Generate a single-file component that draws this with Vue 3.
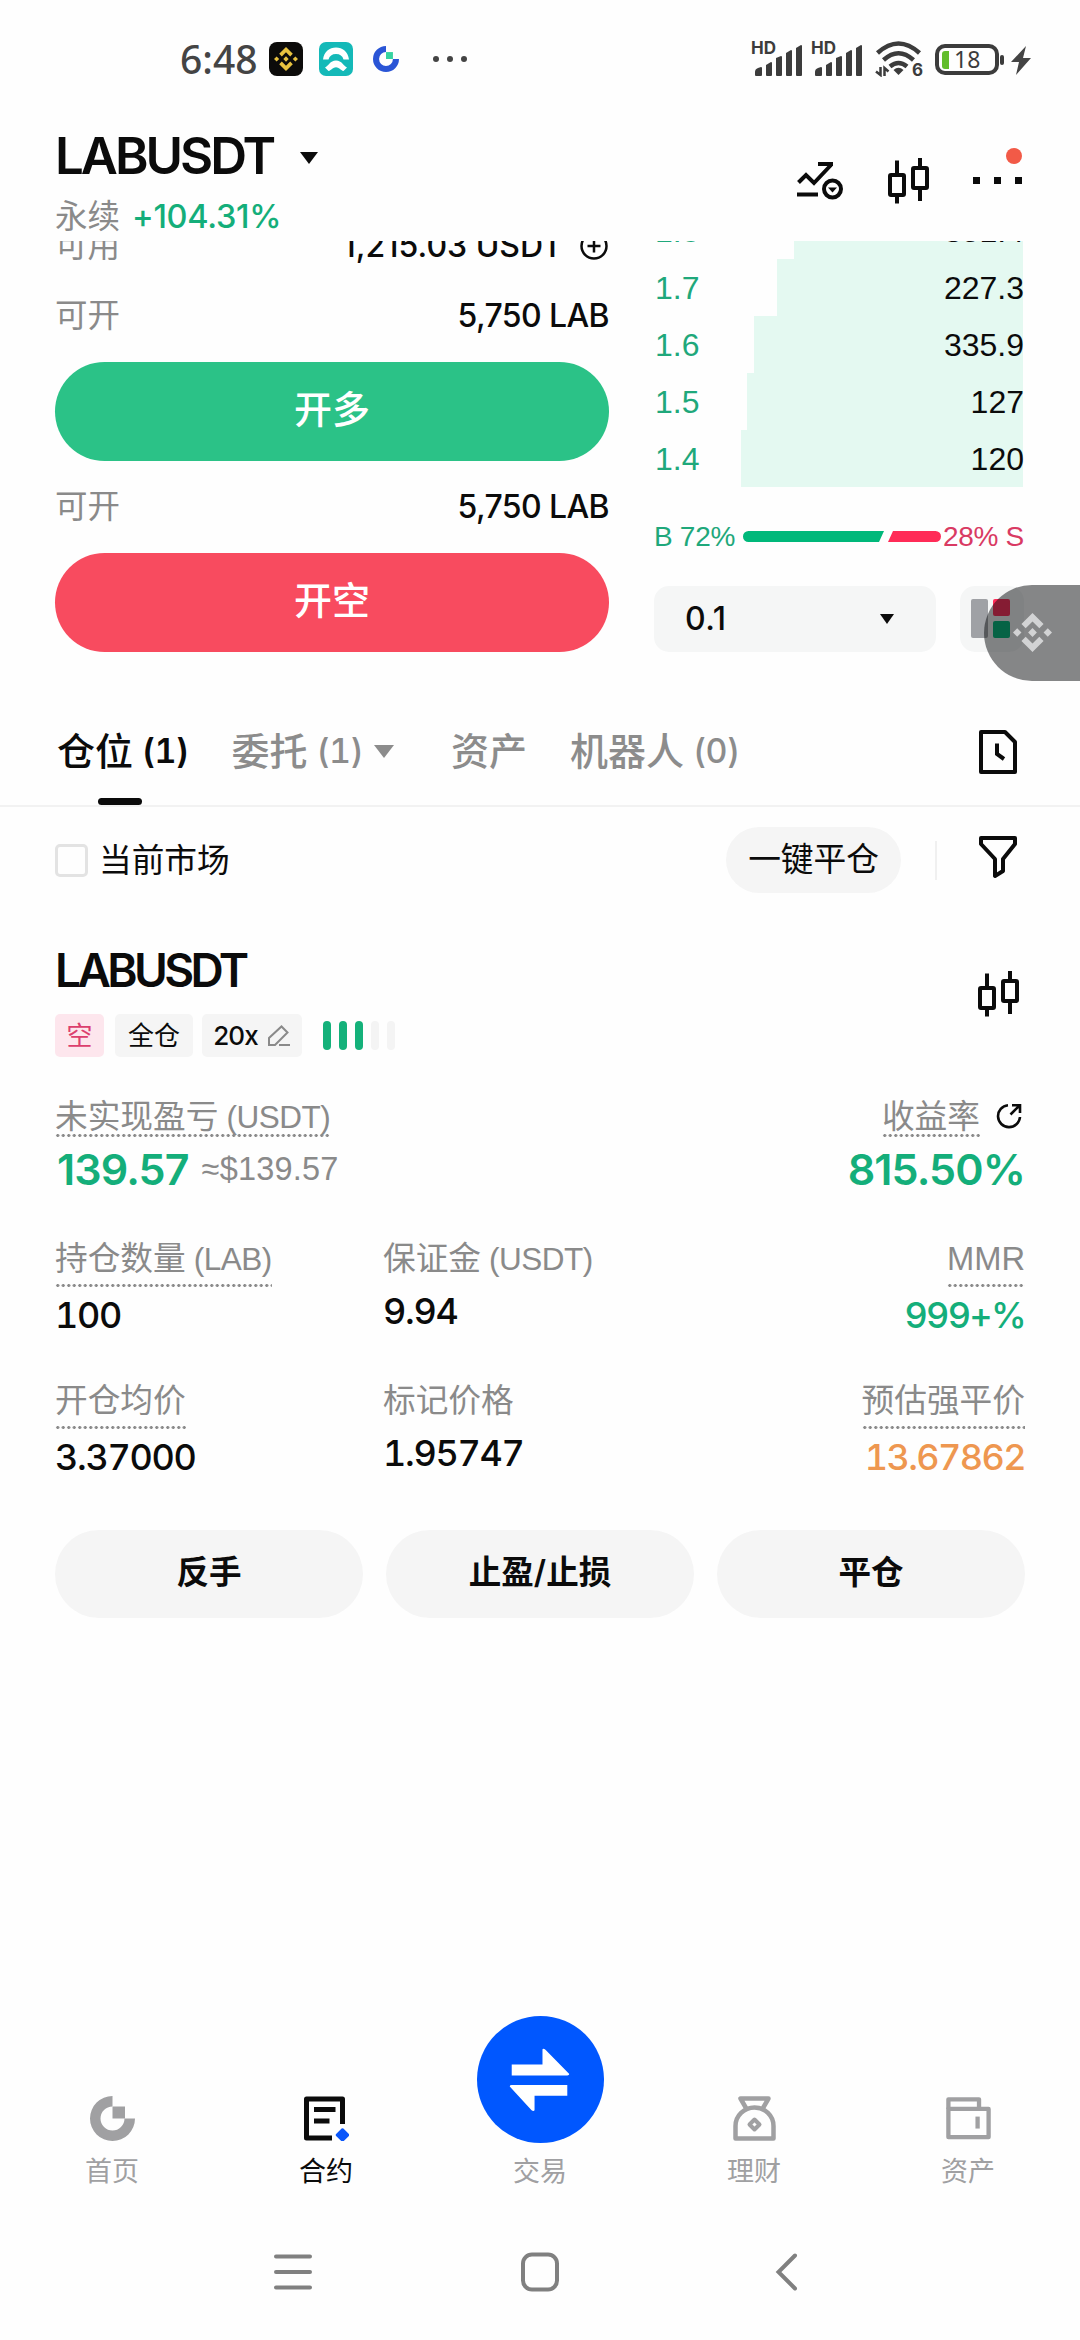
<template>
  <div class="screen">
    <header class="status">
      <div class="status__left">
        <span class="status__time">6:48</span>
        <svg class="status__app" viewBox="0 0 34 34">
          <rect width="34" height="34" rx="8" fill="#0c0b0a" />
          <g fill="#e8c23f" transform="translate(5 5)">
            <use href="#bnb" />
          </g>
        </svg>
        <svg class="status__app status__app--nio" viewBox="0 0 34 34">
          <rect width="34" height="34" rx="7" fill="#14b9b8" />
          <path d="M4 17.500C5 9.500 10.500 5.500 17 5.500s12 4 13 12h-5.500c-1-3.600-3.500-5.500-7.500-5.500s-6.500 1.900-7.500 5.500z" fill="#fff" />
          <path d="M6 25.500C9.500 24 11 18.500 17 18.500s7.500 5.500 11 7l-3.500 3.500c-3-.800-4.500-3.800-7.500-3.800S12.500 28.200 9.500 29z" fill="#fff" />
        </svg>
        <svg class="status__gate" viewBox="0 0 45 45">
          <path d="M22.500 0v10.500a12 12 0 1 0 12 12H45A22.500 22.500 0 1 1 22.500 0z" fill="#2a55d6" />
          <path d="M22.500 10.500h12v12h-12z" fill="#35d3a0" />
        </svg>
        <svg class="status__more" viewBox="0 0 36 8" fill="#444">
          <circle cx="4" cy="4" r="3" />
          <circle cx="18" cy="4" r="3" />
          <circle cx="32" cy="4" r="3" />
        </svg>
      </div>
      <div class="status__right">
        <div v-for="n in 2" :key="n" class="signal">
          <span class="signal__hd">HD</span>
          <svg viewBox="0 0 50 36" fill="#3c3c3c">
            <path d="M2 34v-3q0-3 3-4l3-1q1 0 1 1v7q0 1-1 1H3q-1 0-1-1z" />
            <path d="M13 34V24l5-3q1 0 1 1v12q0 1-1 1h-4q-1 0-1-1z" />
            <path d="M23 34V17l5-2q1 0 1 1v18q0 1-1 1h-4q-1 0-1-1z" />
            <path d="M33 34V12l5-3q1 0 1 1v24q0 1-1 1h-4q-1 0-1-1z" />
            <path d="M43 34V7l5-3q1 0 1 1v29q0 1-1 1h-4q-1 0-1-1z" />
          </svg>
        </div>
        <svg class="wifi" viewBox="0 0 48 36" fill="none" stroke="#3c3c3c">
          <path d="M2.500 12Q23.500-7 44.500 12" stroke-width="4.500" />
          <path d="M8.500 19Q23.500 5.500 38.500 19" stroke-width="4.500" />
          <path d="M15 25.500q8.500-7 17 0" stroke-width="4.500" />
          <path d="M18.500 29q5-4.500 10 0l-5 5z" fill="#3c3c3c" stroke="none" />
          <path d="M5.500 26v8L1 30.500M9.500 35v-8l4 3.500" stroke-width="2.500" />
          <text x="37" y="35" class="wifi__six">6</text>
        </svg>
        <svg class="battery" viewBox="0 0 100 32">
          <rect x="2" y="3" width="60" height="27" rx="8" fill="none" stroke="#3c3c3c" stroke-width="4" />
          <path d="M10 8h4v18h-4q-3 0-3-3V11q0-3 3-3z" fill="#62bd2c" />
          <rect x="65" y="12" width="4" height="10" rx="2" fill="#3c3c3c" />
          <text x="19" y="25" class="battery__text">18</text>
          <path d="M91 3 76 19h8l-3 13 15-17h-8z" fill="#444" />
        </svg>
      </div>
    </header>

    <section class="header">
      <div class="header__info">
        <div class="header__pair">
          <h1>LABUSDT</h1>
          <svg viewBox="0 0 18 12"><path d="M0 0h18L9 12z" fill="#0b0b0b" /></svg>
        </div>
        <div class="header__sub">
          <span>永续</span>
          <span class="header__change">+104.31%</span>
        </div>
      </div>
      <div class="header__icons">
        <svg class="header__trend" viewBox="0 0 46 38" fill="none" stroke="#0b0b0b" stroke-width="4">
          <path d="M1.500 20.500 9 13l8 8L34 3M21 2h15M0 32.500h21" />
          <circle cx="35.500" cy="27" r="8.500" />
          <path d="M31 25.500h9l-4.500 5z" fill="#0b0b0b" stroke="none" />
        </svg>
        <svg class="candles" viewBox="0 0 42 46"><use href="#candles" /></svg>
        <div class="header__menu">
          <i></i><i></i><i></i>
          <b class="header__badge"></b>
        </div>
      </div>
    </section>

    <section class="trade">
      <div class="order">
        <div class="order__row order__row--first">
          <span class="muted">可用</span>
          <span class="order__avail">
            1,215.03 USDT
            <svg viewBox="0 0 28 28" fill="none" stroke="#0b0b0b" stroke-width="2.500">
              <circle cx="14" cy="14" r="12.500" />
              <path d="M14 7.500v13M7.500 14h13" />
            </svg>
          </span>
        </div>
        <div class="order__row">
          <span class="muted">可开</span>
          <span class="order__max">5,750 LAB</span>
        </div>
        <button class="order__btn order__btn--long">开多</button>
        <div class="order__row">
          <span class="muted">可开</span>
          <span class="order__max">5,750 LAB</span>
        </div>
        <button class="order__btn order__btn--short">开空</button>
      </div>

      <div class="book">
        <div v-for="bid in bids" :key="bid.price" class="book__row">
          <div class="book__depth" :style="{ width: bid.depth + 'px' }"></div>
          <span class="book__price">{{ bid.price }}</span>
          <span class="book__amount">{{ bid.amount }}</span>
        </div>
        <div class="ratio">
          <span class="ratio__buy">B 72%</span>
          <svg viewBox="0 0 198 11">
            <path d="M5.500 0H141l-5 11H5.500a5.500 5.500 0 0 1 0-11z" fill="#00b87a" />
            <path d="M150 0h42.500a5.500 5.500 0 0 1 0 11H145z" fill="#ff2b57" />
          </svg>
          <span class="ratio__sell">28% S</span>
        </div>
        <div class="book__controls">
          <div class="book__step">
            <span>0.1</span>
            <svg viewBox="0 0 14 10"><path d="M0 0h14L7 10z" fill="#0b0b0b" /></svg>
          </div>
          <div class="book__layout">
            <svg viewBox="0 0 40 40">
              <rect width="17" height="39" rx="2" fill="#9fa1a5" />
              <rect x="22" width="17" height="17" rx="2" fill="#ff2b57" />
              <rect x="22" y="22" width="17" height="17" rx="2" fill="#00b87a" />
            </svg>
          </div>
        </div>
      </div>

      <div class="floating">
        <svg viewBox="0 0 24 24" fill="#d2d3d4"><use href="#bnb" /></svg>
      </div>
    </section>

    <nav class="tabs">
      <div class="tabs__item tabs__item--active">仓位<span>(1)</span></div>
      <div class="tabs__item tabs__item--orders">
        委托<span>(1)</span>
        <svg viewBox="0 0 20 13"><path d="M0 0h20L10 13z" fill="#8c8c8c" /></svg>
      </div>
      <div class="tabs__item">资产</div>
      <div class="tabs__item">机器人<span>(0)</span></div>
      <svg class="tabs__history" viewBox="0 0 38 44" fill="none" stroke="#0b0b0b" stroke-width="4">
        <path d="M2 2h24l10 10v30H2z" stroke-linejoin="round" />
        <path d="M18 13.500V24l7 5" />
      </svg>
    </nav>

    <section class="filter">
      <span class="filter__box"></span>
      <span class="filter__label">当前市场</span>
      <button class="filter__close">一键平仓</button>
      <i class="filter__line"></i>
      <svg class="filter__icon" viewBox="0 0 38 44" fill="none" stroke="#0b0b0b" stroke-width="4" stroke-linejoin="round">
        <path d="M2 3h34v6L24 24v12l-8 5V24L2 9z" />
      </svg>
    </section>

    <section class="position">
      <div class="position__head">
        <div>
          <h2>LABUSDT</h2>
          <div class="tags">
            <span class="tag tag--short">空</span>
            <span class="tag tag--mode">全仓</span>
            <span class="tag tag--lever">
              20x
              <svg viewBox="0 0 24 22" fill="none" stroke="#8a8a8a" stroke-width="2">
                <path d="M2 20v-7L14.500 1.500l6 6L8 20zM12 20h11" />
              </svg>
            </span>
            <span class="risk">
              <i v-for="n in 5" :key="n" :class="{ on: n <= 3 }"></i>
            </span>
          </div>
        </div>
        <svg class="candles candles--position" viewBox="0 0 42 46"><use href="#candles" /></svg>
      </div>

      <div class="pnl">
        <div>
          <span class="label label--dotted label--pnl">未实现盈亏<em>(USDT)</em></span>
          <div class="pnl__value">139.57 <small>≈$139.57</small></div>
        </div>
        <div class="pnl__right">
          <div class="pnl__rate">
            <span class="label label--dotted label--pnl">收益率</span>
            <svg viewBox="0 0 26 26" fill="none" stroke="#0b0b0b" stroke-width="2.600">
              <path d="M12 2.200A11 11 0 1 0 24 14M14.500 11.500 23 3M16 2.300h8V10" />
            </svg>
          </div>
          <div class="pnl__value">815.50%</div>
        </div>
      </div>

      <div v-for="(row, i) in stats" :key="i" class="stats">
        <div v-for="cell in row" :key="cell.label" class="stats__cell">
          <span class="label" :class="{ 'label--dotted': cell.dotted }">
            {{ cell.label }}<em v-if="cell.unit">{{ cell.unit }}</em>
          </span>
          <div class="stats__value" :class="cell.tone">{{ cell.value }}</div>
        </div>
      </div>

      <div class="actions">
        <button v-for="action in actions" :key="action">{{ action }}</button>
      </div>
    </section>

    <nav class="bottom">
      <div class="bottom__item">
        <svg class="bottom__icon" viewBox="0 0 45 45" fill="#a0a0a2">
          <path d="M22.500 0v10.500a12 12 0 1 0 12 12H45A22.500 22.500 0 1 1 22.500 0z" />
          <path d="M22.500 10.500h12.500v12h-12.500z" />
        </svg>
        <span>首页</span>
      </div>
      <div class="bottom__item bottom__item--active">
        <svg class="bottom__icon" viewBox="0 0 45 45" fill="none" stroke="#0b0b0b" stroke-width="5">
          <path d="M28 42H2.500V3H38.500v25" stroke-linejoin="round" />
          <path d="M10 13.500h21.500M10 25h15.500" />
          <path d="m38.500 33.500 5.500 5.500-5.500 5.500L33 39z" fill="#0a56fa" stroke="#0a56fa" stroke-width="2.500" stroke-linejoin="round" />
        </svg>
        <span>合约</span>
      </div>
      <div class="bottom__item">
        <svg class="bottom__trade" viewBox="0 0 128 128">
          <circle cx="64" cy="64" r="64" fill="#0057ff" />
          <path d="M35 49h31V33.500q1-1 3 .500L93 58.500q0 1.500-2 1.500H35z" fill="#fff" />
          <path d="M91 69.500v11H58V95q-1 1.500-3 0L33 71q0-1.500 2-1.500z" fill="#fff" />
        </svg>
        <span>交易</span>
      </div>
      <div class="bottom__item">
        <svg class="bottom__icon" viewBox="0 0 45 45" fill="none" stroke="#a0a0a2" stroke-width="4.500" stroke-linejoin="round">
          <path d="M14 12 8.500 2.500h28L31 12" />
          <path d="M3.500 42.500V30a19 18.500 0 0 1 38 0v12.500z" />
          <path d="m22.500 23.500 5 5-5 5-5-5z" stroke-width="4" />
        </svg>
        <span>理财</span>
      </div>
      <div class="bottom__item">
        <svg class="bottom__icon" viewBox="0 0 47 45" fill="none" stroke="#a0a0a2" stroke-width="4.500" stroke-linejoin="round">
          <path d="M2.500 12.500V2.500h32v10" />
          <path d="M2.500 12.500h42V42h-42z" />
          <path d="M33 20.500V33" />
        </svg>
        <span>资产</span>
      </div>
    </nav>

    <footer class="system">
      <svg viewBox="0 0 40 40" stroke="#808080" stroke-width="4" stroke-linecap="round">
        <path d="M3 4.500h34M3 20h34M3 35.500h34" />
      </svg>
      <svg viewBox="0 0 40 40" fill="none" stroke="#808080" stroke-width="4">
        <rect x="3" y="2.500" width="34" height="35" rx="9" />
      </svg>
      <svg viewBox="0 0 40 40" fill="none" stroke="#808080" stroke-width="4" stroke-linecap="round">
        <path d="M28 3.500 11.500 20 28 36.500" />
      </svg>
    </footer>

    <!-- shared symbols -->
    <svg class="defs">
      <defs>
        <g id="bnb">
          <path d="M12 0 18.800 6.800 16.200 9.400 12 5.200 7.800 9.400 5.200 6.800z" />
          <path d="M12 24 5.200 17.200l2.600-2.600 4.200 4.200 4.200-4.200 2.600 2.600z" />
          <path d="m12 9.300 2.700 2.700-2.700 2.700L9.300 12zM2.600 9.400 5.200 12l-2.600 2.600L0 12zM21.400 9.400 24 12l-2.600 2.600-2.600-2.600z" />
        </g>
        <g id="candles" fill="none" stroke="#0b0b0b" stroke-width="4">
          <rect x="2" y="17" width="14" height="20" rx="1" />
          <path d="M9 2.500V17M9 37v8.500" />
          <rect x="25" y="10" width="14" height="20" rx="1" />
          <path d="M32 0v10M32 30v13" />
        </g>
      </defs>
    </svg>
  </div>
</template>

<script setup>
const bids = [
  { price: '1.8', amount: '351.4', depth: 229 },
  { price: '1.7', amount: '227.3', depth: 246 },
  { price: '1.6', amount: '335.9', depth: 269 },
  { price: '1.5', amount: '127', depth: 276 },
  { price: '1.4', amount: '120', depth: 282 }
];

const stats = [
  [
    { label: '持仓数量', unit: '(LAB)', value: '100', dotted: true },
    { label: '保证金', unit: '(USDT)', value: '9.94' },
    { label: 'MMR', value: '999+%', dotted: true, tone: 'green' }
  ],
  [
    { label: '开仓均价', value: '3.37000', dotted: true },
    { label: '标记价格', value: '1.95747' },
    { label: '预估强平价', value: '13.67862', dotted: true, tone: 'orange' }
  ]
];

const actions = ['反手', '止盈/止损', '平仓'];
</script>

<style>
body {
  margin: 0;
  background: #fefefe;
}
</style>

<style scoped>
.screen {
  display: flex;
  flex-direction: column;
  width: 1080px;
  height: 2340px;
  overflow: hidden;
  background: #fefefe;
  color: #0b0b0b;
  font-family: Inter, "Noto Sans CJK SC", sans-serif;
  font-size: 32px;
  line-height: 40px;
}

.screen * {
  box-sizing: border-box;
}

svg {
  display: block;
  flex: none;
}

h1,
h2 {
  margin: 0;
  font-weight: 600;
}

em {
  font-style: normal;
}

button {
  padding: 0;
  border: 0;
  color: inherit;
  font: inherit;
}

.defs {
  position: absolute;
  width: 0;
  height: 0;
}

.muted {
  color: #8a8a8a;
  font-size: 32.5px;
}

/* Status bar */
.status {
  display: flex;
  justify-content: space-between;
  height: 118px;
  padding: 0 45px 0 180px;
}

.status__left,
.status__right {
  display: flex;
  align-items: center;
  height: 118px;
}

.status__time {
  width: 89px;
  color: #444;
  font-family: "Noto Sans", sans-serif;
  font-size: 39px;
  font-weight: 500;
}

.status__app {
  width: 34px;
  height: 34px;
}

.status__app--nio {
  margin-left: 16px;
}

.status__gate {
  width: 26px;
  height: 26px;
  margin-left: 20px;
}

.status__more {
  width: 36px;
  height: 8px;
  margin-left: 33px;
}

.signal {
  position: relative;
  width: 50px;
  margin-right: 10px;
}

.signal svg {
  width: 50px;
  height: 36px;
}

.signal__hd {
  position: absolute;
  top: 0;
  left: -2px;
  color: #3c3c3c;
  font-size: 17px;
  font-weight: 700;
  line-height: 14px;
}

.wifi {
  width: 48px;
  height: 36px;
  margin-left: 2px;
}

.wifi__six {
  fill: #3c3c3c;
  stroke: none;
  font-size: 17px;
  font-weight: 700;
}

.battery {
  width: 100px;
  height: 32px;
  margin-left: 12px;
}

.battery__text {
  fill: #3c3c3c;
  font-family: "Noto Sans", sans-serif;
  font-size: 23px;
}

/* Pair header */
.header {
  display: flex;
  justify-content: space-between;
  height: 123px;
  padding: 0 58px 0 55px;
}

.header__info {
  padding-top: 12px;
}

.header__pair {
  display: flex;
  align-items: center;
  gap: 27px;
  height: 52px;
}

.header__pair svg {
  width: 18px;
  height: 12px;
  margin-top: 3px;
}

h1 {
  font-size: 51px;
  letter-spacing: -3px;
  line-height: 52px;
}

.header__sub {
  display: flex;
  gap: 12px;
  height: 40px;
  margin-top: 15px;
  color: #8a8a8a;
  font-size: 32.5px;
}

.header__change {
  color: #14ae7a;
  font-weight: 500;
  letter-spacing: -0.3px;
}

.header__icons {
  display: flex;
  align-items: center;
  height: 125px;
}

.header__trend {
  width: 46px;
  height: 38px;
}

.candles {
  width: 42px;
  height: 46px;
  margin-left: 45px;
}

.header__menu {
  position: relative;
  display: flex;
  gap: 14px;
  margin-left: 43px;
}

.header__menu i {
  width: 7px;
  height: 7px;
  background: #0b0b0b;
}

.header__badge {
  position: absolute;
  top: -29px;
  right: 0;
  width: 16px;
  height: 16px;
  border-radius: 50%;
  background: #f25a47;
}

/* Order form and book */
.trade {
  position: relative;
  display: flex;
  justify-content: space-between;
  height: 454px;
  padding: 0 56px 0 55px;
  overflow: hidden;
}

.order {
  width: 554px;
  margin-top: -19px;
}

.order__row {
  display: flex;
  align-items: center;
  justify-content: space-between;
  height: 92px;
}

.order__row--first {
  height: 48px;
}

.order__avail,
.order__max {
  font-weight: 500;
  letter-spacing: -0.6px;
}

.order__avail {
  display: flex;
  align-items: center;
  gap: 17px;
  letter-spacing: 0;
}

.order__avail svg {
  width: 28px;
  height: 28px;
  margin-right: 1px;
}

.order__btn {
  display: flex;
  align-items: center;
  justify-content: center;
  width: 100%;
  height: 99px;
  padding-bottom: 5px;
  border-radius: 50px;
  color: #fff;
  font-size: 38px;
  font-weight: 500;
}

.order__btn--long {
  background: #2bc287;
}

.order__btn--short {
  background: #f84b5f;
}

.book {
  width: 370px;
  margin-top: -39px;
}

.book__row {
  position: relative;
  display: flex;
  align-items: center;
  justify-content: space-between;
  height: 57px;
  padding-left: 1px;
  font-family: "Liberation Sans", sans-serif;
}

.book__depth {
  position: absolute;
  top: 0;
  right: 1px;
  height: 57px;
  background: #e4f9f1;
}

.book__price {
  color: #1fa87b;
}

.book__amount {
  position: relative;
}

.ratio {
  display: flex;
  align-items: center;
  justify-content: space-between;
  height: 99px;
  font-family: "Liberation Sans", sans-serif;
  font-size: 28px;
  letter-spacing: -0.3px;
}

.ratio svg {
  width: 198px;
  height: 11px;
}

.ratio__buy {
  width: 86px;
  color: #1fa87b;
}

.ratio__sell {
  color: #d93a63;
}

.book__controls {
  display: flex;
  gap: 24px;
}

.book__step,
.book__layout {
  display: flex;
  align-items: center;
  height: 66px;
  border-radius: 15px;
  background: #f5f6f6;
}

.book__step {
  justify-content: space-between;
  width: 282px;
  padding: 0 42px 0 31px;
  font-weight: 500;
}

.book__step span {
  letter-spacing: 0.5px;
}

.book__step svg {
  width: 14px;
  height: 10px;
}

.book__layout {
  width: 64px;
  padding-left: 11px;
}

.book__layout svg {
  width: 40px;
  height: 40px;
}

.floating {
  position: absolute;
  top: 344px;
  right: 0;
  width: 96px;
  height: 96px;
  padding: 28px 0 0 29px;
  border-radius: 48px 0 0 48px;
  background: rgba(12, 14, 16, 0.5);
}

.floating svg {
  width: 39px;
  height: 39px;
}

/* Tabs */
.tabs {
  display: flex;
  align-items: center;
  height: 112px;
  padding: 0 63px 0 57px;
  border-bottom: 2px solid #f2f2f2;
}

.tabs__item {
  position: relative;
  display: flex;
  align-items: center;
  height: 110px;
  padding-top: 2px;
  margin-right: 43px;
  color: #8c8c8c;
  font-size: 38px;
  font-weight: 500;
}

.tabs__item span {
  margin-left: 9px;
  font-size: 34px;
  font-variant-numeric: tabular-nums;
  letter-spacing: -0.7px;
}

.tabs__item--active {
  color: #0b0b0b;
}

.tabs__item--active span {
  font-weight: 600;
}

.tabs__item--active::after {
  content: "";
  position: absolute;
  bottom: 0;
  left: 41px;
  width: 44px;
  height: 7px;
  border-radius: 4px;
  background: #0b0b0b;
}

.tabs__item--orders {
  margin-right: 57px;
}

.tabs__item--orders svg {
  width: 20px;
  height: 13px;
  margin-left: 11px;
}

.tabs__history {
  width: 38px;
  height: 44px;
  margin: 3px 0 0 auto;
}

/* Filter row */
.filter {
  display: flex;
  align-items: center;
  height: 106px;
  padding: 0 63px 0 55px;
  font-size: 32.7px;
}

.filter__box {
  width: 33px;
  height: 33px;
  border: 3px solid #e3e3e3;
  border-radius: 5px;
}

.filter__label {
  margin-left: 11px;
}

.filter__close {
  width: 175px;
  height: 66px;
  margin-left: auto;
  padding-bottom: 3px;
  border-radius: 33px;
  background: #f5f5f5;
}

.filter__line {
  width: 2px;
  height: 39px;
  margin: 0 42px 0 34px;
  background: #f0f0f0;
}

.filter__icon {
  width: 38px;
  height: 44px;
  margin-bottom: 6px;
}

/* Position card */
.position {
  padding: 27px 55px 0;
}

.position__head {
  display: flex;
  justify-content: space-between;
  height: 156px;
}

h2 {
  height: 60px;
  font-size: 46px;
  letter-spacing: -3.6px;
  line-height: 60px;
}

.candles--position {
  margin: 31px 5px 0 0;
}

.tags {
  display: flex;
  align-items: center;
  height: 43px;
  margin-top: 14px;
}

.tag {
  display: flex;
  align-items: center;
  justify-content: center;
  height: 43px;
  border-radius: 5px;
  background: #f5f5f5;
  font-size: 26px;
}

.tag--short {
  width: 49px;
  background: #fde6ed;
  color: #dc3f6e;
}

.tag--mode {
  width: 78px;
  margin-left: 11px;
}

.tag--lever {
  gap: 9px;
  width: 100px;
  margin-left: 9px;
  font-weight: 500;
  letter-spacing: -1px;
}

.tag--lever svg {
  width: 24px;
  height: 22px;
}

.risk {
  display: flex;
  gap: 8px;
  margin-left: 21px;
}

.risk i {
  width: 8px;
  height: 29px;
  border-radius: 4px;
  background: #f4f4f4;
}

.risk i.on {
  background: #14b17a;
}

.label {
  display: inline-block;
  height: 40px;
  color: #8a8a8a;
  font-family: "Liberation Sans", "Noto Sans CJK SC", sans-serif;
  font-size: 32.7px;
  line-height: 41px;
  white-space: nowrap;
}

.label em {
  margin-left: 8px;
  font-size: 31.5px;
  letter-spacing: -0.5px;
}

.label--dotted {
  height: 49px;
  background: radial-gradient(circle, #8a8a8a 1.3px, transparent 1.8px) 0 100% / 5.5px 3px repeat-x;
}

.label--pnl {
  height: 41px;
}

.pnl {
  display: flex;
  justify-content: space-between;
  height: 142px;
}

.pnl > div {
  display: flex;
  flex-direction: column;
  align-items: flex-start;
}

.pnl__value {
  display: flex;
  align-items: center;
  height: 60px;
  margin-top: 2px;
  padding-left: 2px;
  color: #14ae7a;
  font-size: 43px;
  font-weight: 600;
  letter-spacing: -0.9px;
}

.pnl__value small {
  margin-left: 13px;
  color: #8a8a8a;
  font-family: "Liberation Sans", sans-serif;
  font-size: 32.5px;
  font-weight: 400;
  letter-spacing: 0.2px;
}

.pnl > .pnl__right {
  align-items: flex-end;
}

.pnl__rate {
  display: flex;
}

.pnl__rate svg {
  width: 26px;
  height: 26px;
  margin: 7px 3px 0 16px;
}

.stats {
  display: grid;
  grid-template-columns: 328px 1fr auto;
  height: 142px;
}

.stats__cell {
  display: flex;
  flex-direction: column;
  align-items: flex-start;
}

.stats__cell:last-child {
  align-items: flex-end;
}

.stats__value {
  height: 44px;
  margin-top: 11px;
  font-size: 36px;
  font-weight: 500;
  font-variant-numeric: tabular-nums;
  letter-spacing: -1.3px;
  line-height: 44px;
}

.label--dotted + .stats__value {
  margin-top: 6px;
}

.stats__value.green {
  color: #14ae7a;
  letter-spacing: -1.7px;
}

.stats__value.orange {
  color: #ee9750;
  letter-spacing: -1.6px;
}

.actions {
  display: grid;
  grid-template-columns: repeat(3, 308px);
  justify-content: space-between;
  margin-top: 8px;
}

.actions button {
  height: 88px;
  padding-bottom: 3px;
  border-radius: 44px;
  background: #f5f5f5;
  font-size: 32.5px;
  font-weight: 600;
}

/* Bottom navigation */
.bottom {
  display: grid;
  grid-template-columns: repeat(5, 214px);
  justify-content: center;
  height: 190px;
  margin-top: auto;
}

.bottom__item {
  display: flex;
  flex-direction: column;
  align-items: center;
  justify-content: flex-end;
  color: #a0a0a2;
  font-size: 27px;
}

.bottom__item span {
  height: 40px;
  margin: 8px 0 13px;
}

.bottom__item--active {
  color: #0b0b0b;
}

.bottom__icon {
  width: 45px;
  height: 45px;
  margin-bottom: 3px;
}

.bottom__trade {
  width: 127px;
  height: 127px;
  margin-bottom: 1px;
}

.system {
  display: flex;
  justify-content: center;
  gap: 207px;
  height: 135px;
  padding-top: 47px;
}

.system svg {
  width: 40px;
  height: 40px;
}
</style>
